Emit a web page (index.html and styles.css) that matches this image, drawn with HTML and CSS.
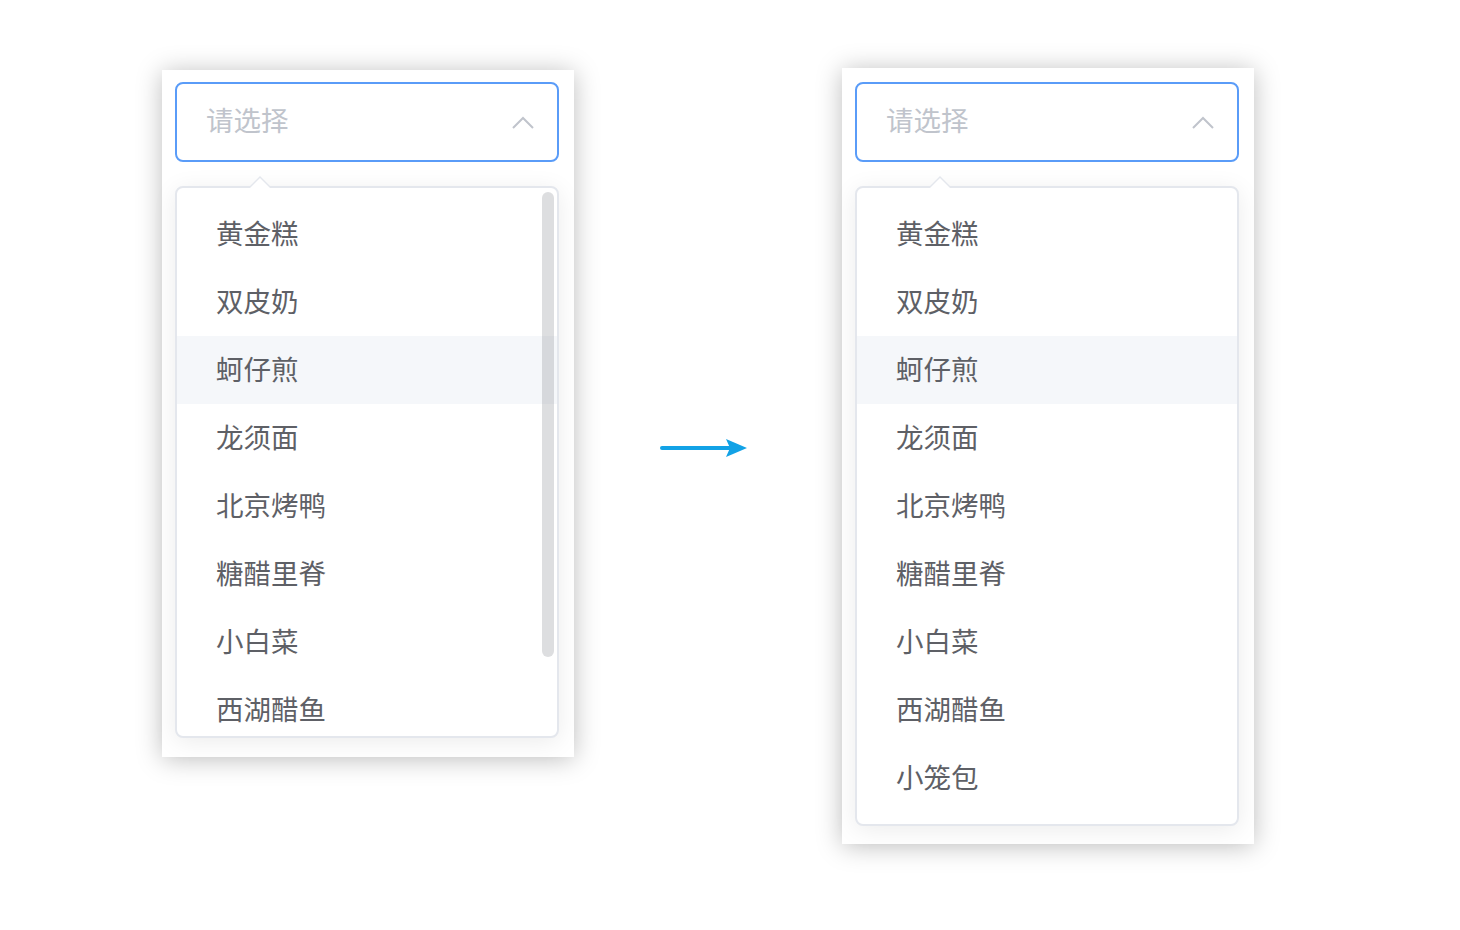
FILE: index.html
```html
<!DOCTYPE html>
<html lang="zh">
<head>
<meta charset="utf-8">
<link rel="stylesheet" href="styles.css">
</head>
<body>
<div class="stage">
  <div class="panel panel-left">
    <div class="select">
      <span class="placeholder">请选择</span>
      <svg class="chevron" width="22" height="13" viewBox="0 0 22 13"><path d="M1 12 L11 2 L21 12" fill="none" stroke="#c0c4cc" stroke-width="2"/></svg>
    </div>
    <div class="dropdown dropdown-scroll">
      <span class="popper-arrow"></span>
      <ul class="list">
        <li>黄金糕</li>
        <li>双皮奶</li>
        <li class="hover">蚵仔煎</li>
        <li>龙须面</li>
        <li>北京烤鸭</li>
        <li>糖醋里脊</li>
        <li>小白菜</li>
        <li>西湖醋鱼</li>
      </ul>
      <span class="scrollbar"></span>
    </div>
  </div>

  <div class="arrow">
    <svg width="88" height="22" viewBox="0 0 88 22"><line x1="2" y1="11" x2="70" y2="11" stroke="#12a2e6" stroke-width="4" stroke-linecap="round"/><path d="M66 2 L87 11 L66 20 L70 11 Z" fill="#12a2e6"/></svg>
  </div>

  <div class="panel panel-right">
    <div class="select">
      <span class="placeholder">请选择</span>
      <svg class="chevron" width="22" height="13" viewBox="0 0 22 13"><path d="M1 12 L11 2 L21 12" fill="none" stroke="#c0c4cc" stroke-width="2"/></svg>
    </div>
    <div class="dropdown">
      <span class="popper-arrow"></span>
      <ul class="list">
        <li>黄金糕</li>
        <li>双皮奶</li>
        <li class="hover">蚵仔煎</li>
        <li>龙须面</li>
        <li>北京烤鸭</li>
        <li>糖醋里脊</li>
        <li>小白菜</li>
        <li>西湖醋鱼</li>
        <li>小笼包</li>
      </ul>
    </div>
  </div>
</div>
</body>
</html>
```

FILE: styles.css
```css
* { box-sizing: border-box; }
html, body { margin: 0; padding: 0; background: #fff; }
body {
  font-family: "Noto Sans CJK SC", "Noto Sans", sans-serif;
  width: 1460px;
  height: 930px;
  overflow: hidden;
}
.stage {
  display: flex;
  align-items: flex-start;
  padding: 68px 0 0 162px;
}
.panel {
  width: 412px;
  background: #fff;
  box-shadow: 0 2px 24px rgba(0, 0, 0, 0.26);
  padding: 14px 13px 18px 13px;
  display: flex;
  flex-direction: column;
}
.panel-left {
  margin-top: 2px;
  padding-top: 12px;
  padding-bottom: 19px;
}
.select {
  width: 384px;
  height: 80px;
  border: 2px solid #5a9cf8;
  border-radius: 8px;
  display: flex;
  align-items: center;
  justify-content: space-between;
  padding: 0 23px 0 29px;
}
.placeholder {
  font-size: 27.5px;
  color: #c0c4cc;
  line-height: 1;
  margin-top: -4px;
}
.chevron { display: block; margin-top: 0; }
.dropdown {
  position: relative;
  width: 384px;
  margin-top: 24px;
  border: 2px solid #e4e7ed;
  border-radius: 8px;
  background: #fff;
  box-shadow: 0 4px 24px rgba(0, 0, 0, 0.08);
}
.popper-arrow {
  position: absolute;
  top: -12px;
  left: 71px;
  width: 0;
  height: 0;
  border-left: 12px solid transparent;
  border-right: 12px solid transparent;
  border-bottom: 12px solid #e4e7ed;
}
.popper-arrow::after {
  content: "";
  position: absolute;
  top: 2px;
  left: -10px;
  border-left: 10px solid transparent;
  border-right: 10px solid transparent;
  border-bottom: 10px solid #fff;
}
.list {
  list-style: none;
  margin: 0;
  padding: 12px 0;
  border-radius: 6px;
  overflow: hidden;
}
.dropdown-scroll .list {
  height: 548px;
}
.list li {
  height: 68px;
  line-height: 64px;
  padding: 0 39px 4px;
  font-size: 27.5px;
  color: #5e6066;
  white-space: nowrap;
}
.list li.hover { background: #f5f7fa; }
.scrollbar {
  position: absolute;
  top: 4px;
  right: 3px;
  width: 12px;
  height: 465px;
  border-radius: 6px;
  background: rgba(144, 147, 153, 0.3);
}
.arrow {
  margin: 369px 96px 0 86px;
  width: 86px;
}
.arrow svg { display: block; }
```
